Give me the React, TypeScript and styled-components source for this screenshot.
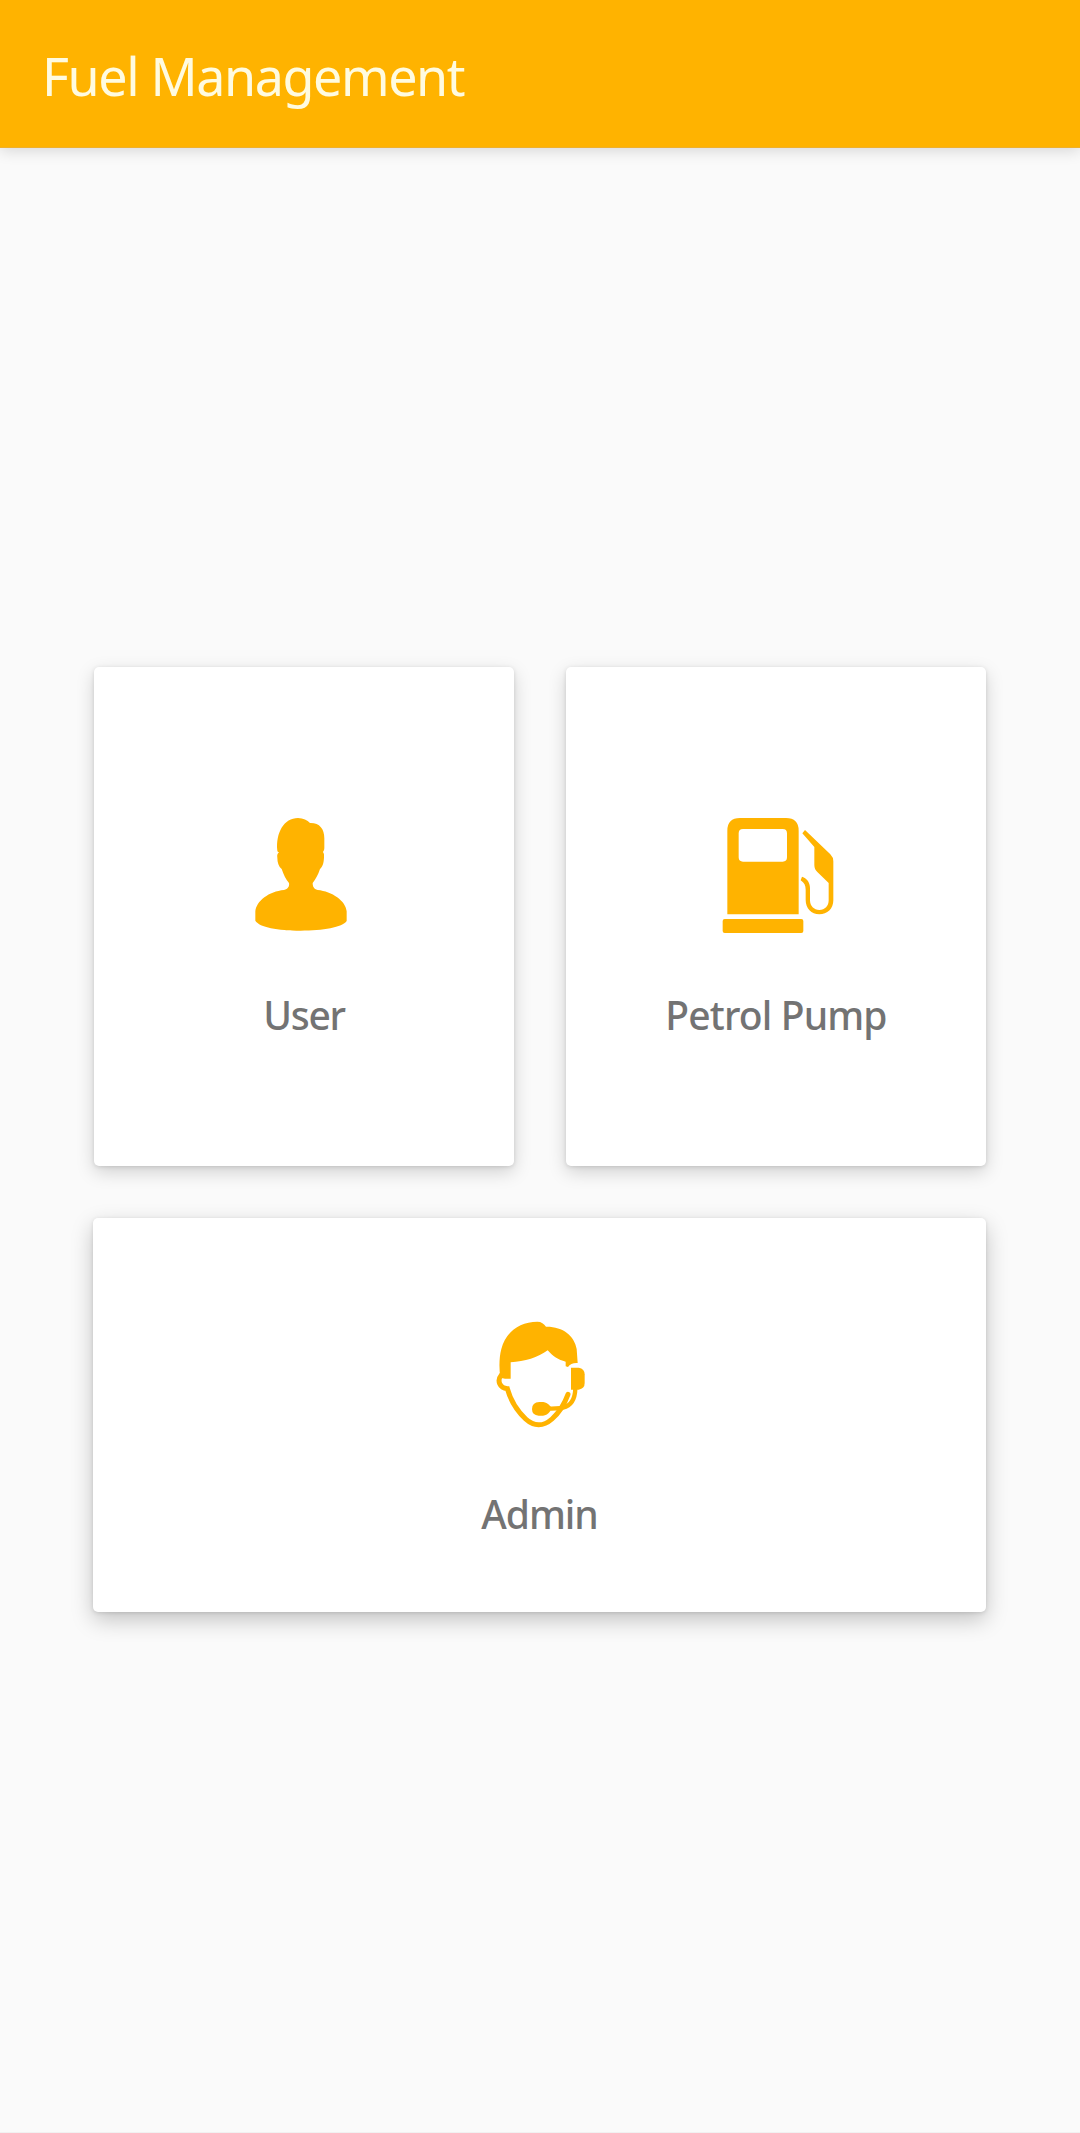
import React from "react";
import styled, { createGlobalStyle } from "styled-components";

const AMBER = "#ffb300";

const GlobalStyle = createGlobalStyle`
  *, *::before, *::after { box-sizing: border-box; }
  html, body { margin: 0; background: #fafafa; }
  body { font-family: "Noto Sans", "Open Sans", sans-serif; }
`;

const Screen = styled.div`
  display: flex;
  flex-direction: column;
  width: 1080px;
  height: 2133px;
  background: #fafafa;
  border-bottom: 1px solid #f1f1f1;
  overflow: hidden;
`;

const AppBar = styled.header`
  display: flex;
  align-items: center;
  flex: none;
  height: 148px;
  padding: 4px 42px 0;
  background: ${AMBER};
  border-bottom: 1px solid #efb02c;
  box-shadow: 0 3px 14px rgba(0, 0, 0, 0.14);
`;

const Title = styled.h1`
  margin: 0;
  font-size: 52px;
  font-weight: 400;
  line-height: 70px;
  letter-spacing: -1.4px;
  color: #fffbe0;
  white-space: nowrap;
`;

const Menu = styled.main`
  display: grid;
  grid-template-columns: 420px 420px;
  grid-template-rows: 499px 394px;
  gap: 52px;
  padding: 519px 94px 0;
`;

const Card = styled.button<{ $wide?: boolean }>`
  display: flex;
  flex-direction: column;
  align-items: center;
  justify-content: flex-start;
  grid-column: ${(p) => (p.$wide ? "1 / -1" : "auto")};
  gap: ${(p) => (p.$wide ? 39 : 35)}px;
  margin: 0 0 0 ${(p) => (p.$wide ? -1 : 0)}px;
  padding: ${(p) => (p.$wide ? 87 : 133)}px 0 0;
  border: 0;
  border-radius: 5px;
  background: #fff;
  font-family: inherit;
  box-shadow: ${(p) =>
    p.$wide
      ? "0 8px 22px rgba(0,0,0,.22), 0 1px 4px rgba(0,0,0,.12)"
      : "0 6px 18px rgba(0,0,0,.17), 0 1px 4px rgba(0,0,0,.12)"};
`;

const Label = styled.span<{ $tracking: number }>`
  font-size: 39px;
  font-weight: 500;
  line-height: 60px;
  letter-spacing: ${(p) => p.$tracking}px;
  color: #737373;
  white-space: nowrap;
`;

const Icon = styled.svg`
  display: block;
  flex: none;
  fill: ${AMBER};
`;

const UserIcon = () => (
  <Icon width="120" height="150" viewBox="12 0 360 450">
    <path d="M112 152C107 98 132 54 174 54C190 54 202 61 210 69C238 68 253 86 253 115V145Q253 152 249 156Q254 161 252 173C251 188 249 198 240 207C234 225 227 238 218 249C218 259 221 267 233 270C276 274 318 303 320 334V363C307 382 249 392 182 392C113 392 59 382 46 362V334C49 303 87 274 132 270C144 267 149 259 147 249C137 238 131 224 125 207C116 199 112 188 112 173Q110 162 117 157Q112 155 112 152Z" />
  </Icon>
);

const PumpIcon = () => (
  <Icon width="140" height="150" viewBox="-12 0 420 450">
    <path
      fillRule="evenodd"
      d="M52 343V92Q52 54 90 54H228Q266 54 266 92V343ZM99 87Q86 87 86 100V172Q86 185 99 185H218Q231 185 231 172V100Q231 87 218 87Z"
    />
    <rect x="38" y="357" width="242" height="42" rx="6" />
    <path d="M285 90L361 163Q370 172 370 184V301C370 327 352 343 328 343C304 343 287 325 287 300V269C287 257 283 248 272 241L276 230C292 235 300 248 300 265V301C300 318 312 330 328 330C345 330 356 318 356 301V249L322 216Q313 208 313 195V141L277 100Z" />
  </Icon>
);

const SupportIcon = () => (
  <Icon width="120" height="140" viewBox="0 0 360 420">
    <path d="M61 218C57 190 57 158 64 132C78 80 119 50 172 50C184 50 192 56 198 65C248 64 283 92 290 132L293 174C280 173 270 177 264 186L257 184V170C235 165 218 153 203 136C174 158 134 170 92 172V221H75Z" />
    <path d="M64 210C50 227 59 249 82 251C91 284 112 318 137 342C162 365 190 365 216 342C236 324 252 301 264 268" fill="none" stroke={AMBER} strokeWidth="15" strokeLinecap="round" />
    <path d="M273 188H296Q314 191 314 208V234Q314 251 296 254H273Z" />
    <path d="M286 251C285 284 274 302 249 308Q232 311 200 311" fill="none" stroke={AMBER} strokeWidth="13" />
    <path d="M178 291H190Q201 292 211 304V318Q201 332 189 332H176Q156 330 156 312Q156 292 178 291Z" />
  </Icon>
);

export default function App() {
  return (
    <>
      <GlobalStyle />
      <Screen>
        <AppBar>
          <Title>Fuel Management</Title>
        </AppBar>
        <Menu>
          <Card>
            <UserIcon />
            <Label $tracking={-1.3}>User</Label>
          </Card>
          <Card>
            <PumpIcon />
            <Label $tracking={-0.85}>Petrol Pump</Label>
          </Card>
          <Card $wide>
            <SupportIcon />
            <Label $tracking={-1}>Admin</Label>
          </Card>
        </Menu>
      </Screen>
    </>
  );
}
